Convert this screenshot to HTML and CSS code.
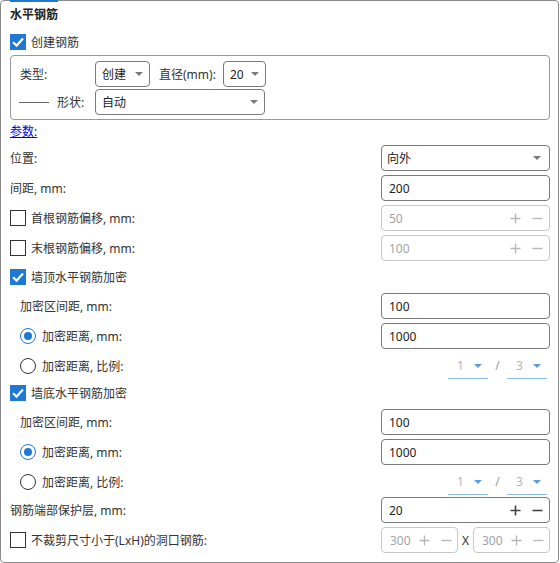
FILE: index.html
```html
<!DOCTYPE html>
<html lang="zh">
<head>
    <meta charset="UTF-8">
    <title>水平钢筋</title>
    <link rel="stylesheet" href="styles.css">
</head>
<body>

<div class="panel">
    <div class="title">水平钢筋</div>

    <div class="check-row">
        <span class="cb on"><svg viewBox="0 0 14 14"><polyline points="2,7.2 5.6,10.6 12,3.6"/></svg></span>
        <span>创建钢筋</span>
    </div>

    <div class="group">
        <div class="group-row">
            <span class="g-label">类型:</span>
            <div class="combo w-type"><span>创建</span><i class="arrow"></i></div>
            <span class="g-label dia">直径(mm):</span>
            <div class="combo w-dia"><span>20</span><i class="arrow"></i></div>
        </div>
        <div class="group-row">
            <span class="line"></span>
            <span class="g-label shape">形状:</span>
            <div class="combo w-shape"><span>自动</span><i class="arrow"></i></div>
        </div>
    </div>

    <a class="params" href="#">参数:</a>

    <div class="rows">
        <div class="row">
            <span>位置:</span>
            <div class="field combo"><span>向外</span><i class="arrow"></i></div>
        </div>
        <div class="row">
            <span>间距, mm:</span>
            <div class="field"><span>200</span></div>
        </div>
        <div class="row">
            <span class="check"><span class="cb"></span>首根钢筋偏移, mm:</span>
            <div class="field spin off">
                <span>50</span>
                <svg class="pm" viewBox="0 0 11 11"><path d="M5.5 0.5v10M0.5 5.5h10"/></svg>
                <svg class="pm" viewBox="0 0 11 11"><path d="M0.5 5.5h10"/></svg>
            </div>
        </div>
        <div class="row">
            <span class="check"><span class="cb"></span>末根钢筋偏移, mm:</span>
            <div class="field spin off">
                <span>100</span>
                <svg class="pm" viewBox="0 0 11 11"><path d="M5.5 0.5v10M0.5 5.5h10"/></svg>
                <svg class="pm" viewBox="0 0 11 11"><path d="M0.5 5.5h10"/></svg>
            </div>
        </div>
        <div class="row short">
            <span class="check"><span class="cb on"><svg viewBox="0 0 14 14"><polyline points="2,7.2 5.6,10.6 12,3.6"/></svg></span>墙顶水平钢筋加密</span>
        </div>
        <div class="row">
            <span class="indent">加密区间距, mm:</span>
            <div class="field"><span>100</span></div>
        </div>
        <div class="row">
            <span class="radio-label"><span class="rb on"></span>加密距离, mm:</span>
            <div class="field"><span>1000</span></div>
        </div>
        <div class="row ratio-row">
            <span class="radio-label"><span class="rb"></span>加密距离, 比例:</span>
            <div class="ratio">
                <div class="mini"><span>1</span><i class="arrow blue"></i></div>
                <span class="slash">/</span>
                <div class="mini"><span>3</span><i class="arrow blue"></i></div>
            </div>
        </div>
        <div class="row short">
            <span class="check"><span class="cb on"><svg viewBox="0 0 14 14"><polyline points="2,7.2 5.6,10.6 12,3.6"/></svg></span>墙底水平钢筋加密</span>
        </div>
        <div class="row">
            <span class="indent">加密区间距, mm:</span>
            <div class="field"><span>100</span></div>
        </div>
        <div class="row">
            <span class="radio-label"><span class="rb on"></span>加密距离, mm:</span>
            <div class="field"><span>1000</span></div>
        </div>
        <div class="row ratio-row">
            <span class="radio-label"><span class="rb"></span>加密距离, 比例:</span>
            <div class="ratio">
                <div class="mini"><span>1</span><i class="arrow blue"></i></div>
                <span class="slash">/</span>
                <div class="mini"><span>3</span><i class="arrow blue"></i></div>
            </div>
        </div>
        <div class="row">
            <span>钢筋端部保护层, mm:</span>
            <div class="field spin">
                <span>20</span>
                <svg class="pm" viewBox="0 0 11 11"><path d="M5.5 0.5v10M0.5 5.5h10"/></svg>
                <svg class="pm" viewBox="0 0 11 11"><path d="M0.5 5.5h10"/></svg>
            </div>
        </div>
        <div class="row">
            <span class="check"><span class="cb"></span>不裁剪尺寸小于(LxH)的洞口钢筋:</span>
            <div class="pair">
                <div class="field small spin off">
                    <span>300</span>
                    <svg class="pm" viewBox="0 0 11 11"><path d="M5.5 0.5v10M0.5 5.5h10"/></svg>
                    <svg class="pm" viewBox="0 0 11 11"><path d="M0.5 5.5h10"/></svg>
                </div>
                <span class="times">X</span>
                <div class="field small spin off">
                    <span>300</span>
                    <svg class="pm" viewBox="0 0 11 11"><path d="M5.5 0.5v10M0.5 5.5h10"/></svg>
                    <svg class="pm" viewBox="0 0 11 11"><path d="M0.5 5.5h10"/></svg>
                </div>
            </div>
        </div>
    </div>
</div>

</body>
</html>
```

FILE: styles.css
```css
body {
    margin: 0;
    background: #fff;
    font-family: "Noto Sans", "Noto Sans CJK SC", sans-serif;
    font-size: 12px;
    color: #333;
}
.panel {
    position: relative;
    width: 559px;
    height: 563px;
    box-sizing: border-box;
    border: 1px solid #8a8a8a;
    border-radius: 4px;
    padding: 0 8px 0 9px;
}
.panel::before {
    content: "";
    position: absolute;
    top: -1px;
    left: 9px;
    width: 48px;
    height: 2px;
    background: #1e78d4;
}
.title {
    margin-top: 6px;
    line-height: 16px;
    font-weight: bold;
    color: #222;
}
.check-row {
    display: flex;
    align-items: center;
    gap: 5px;
    height: 20px;
    margin-top: 9px;
}

/* checkbox / radio */
.cb {
    display: inline-block;
    flex: none;
    width: 16px;
    height: 16px;
    box-sizing: border-box;
    border: 1px solid #333;
    background: #fff;
}
.cb.on {
    border-color: #1e78d4;
    background: #1e78d4;
}
.cb svg {
    display: block;
    width: 14px;
    height: 14px;
}
.cb polyline {
    fill: none;
    stroke: #fff;
    stroke-width: 2.2;
}
.rb {
    display: inline-block;
    flex: none;
    width: 16px;
    height: 16px;
    box-sizing: border-box;
    border: 1px solid #333;
    border-radius: 50%;
    background: #fff;
    position: relative;
}
.rb.on {
    border: 1.5px solid #1e78d4;
}
.rb.on::after {
    content: "";
    position: absolute;
    left: 2.5px;
    top: 2.5px;
    width: 8px;
    height: 8px;
    border-radius: 50%;
    background: #1e78d4;
}

/* group box */
.group {
    margin-top: 3px;
    border: 1px solid #999;
    border-radius: 4px;
    padding: 5px 8px 4px 8px;
    display: flex;
    flex-direction: column;
    gap: 2px;
}
.group-row {
    display: flex;
    align-items: center;
    height: 26px;
}
.g-label {
    width: 76px;
    flex: none;
    padding-left: 1px;
    box-sizing: border-box;
}
.g-label.dia {
    width: 73px;
    padding-left: 9px;
}
.g-label.shape {
    width: 38px;
    padding-left: 0;
}
.line {
    width: 30px;
    height: 1px;
    background: #666;
    margin-right: 8px;
    flex: none;
}

/* combos and fields */
.combo,
.field {
    display: flex;
    align-items: center;
    height: 26px;
    box-sizing: border-box;
    border: 1px solid #7a7a7a;
    border-radius: 4px;
    background: #fff;
    color: #222;
}
.combo {
    justify-content: space-between;
    padding: 0 6px 0 6px;
}
.w-type { width: 55px; }
.w-dia { width: 43px; }
.w-shape { width: 170px; }
.arrow {
    width: 0;
    height: 0;
    border-left: 4px solid transparent;
    border-right: 4px solid transparent;
    border-top: 4px solid #7a7a7a;
}
.arrow.blue {
    border-top-color: #5a9de0;
}

.params {
    display: block;
    width: fit-content;
    margin-top: 4px;
    line-height: 16px;
    color: #0000ee;
    text-decoration: underline;
}

.rows {
    margin-top: 5px;
    display: flex;
    flex-direction: column;
    gap: 4px;
}
.row {
    display: flex;
    align-items: center;
    justify-content: space-between;
    height: 26px;
}
.row.short {
    height: 24px;
}
.row.ratio-row {
    margin-bottom: -2px;
    align-items: stretch;
}
.check {
    display: flex;
    align-items: center;
    gap: 5px;
}
.indent {
    padding-left: 10px;
}
.radio-label {
    display: flex;
    align-items: center;
    gap: 6px;
    padding-left: 10px;
}
.field {
    width: 169px;
    padding: 0 6px 0 7px;
}
.field.combo {
    padding-right: 8px;
    padding-left: 5px;
}
.field > span {
    flex: 1;
    min-width: 0;
}
.spin {
    gap: 11px;
}
.pm {
    width: 11px;
    height: 11px;
    flex: none;
}
.pm path {
    fill: none;
    stroke: #444;
    stroke-width: 1.6;
}
.field.off {
    border-color: #c8c8c8;
    color: #a3a3a3;
}
.field.off .pm path {
    stroke: #b8b8b8;
    stroke-width: 1.4;
}

/* ratio */
.ratio {
    width: 169px;
    display: flex;
    justify-content: flex-end;
    padding-right: 3px;
    box-sizing: border-box;
}
.mini {
    width: 40px;
    display: flex;
    align-items: center;
    justify-content: space-between;
    padding: 0 6px 0 9px;
    box-sizing: border-box;
    border-bottom: 1px solid #8cbbe8;
    color: #b5b5b5;
}
.slash {
    width: 19px;
    text-align: center;
    line-height: 26px;
    color: #9a9a9a;
}

/* last row */
.pair {
    width: 169px;
    display: flex;
    align-items: center;
}
.field.small {
    width: 77px;
    flex: none;
    gap: 11px;
    padding: 0 5px 0 8px;
}
.times {
    width: 15px;
    text-align: center;
    color: #333;
}
```
